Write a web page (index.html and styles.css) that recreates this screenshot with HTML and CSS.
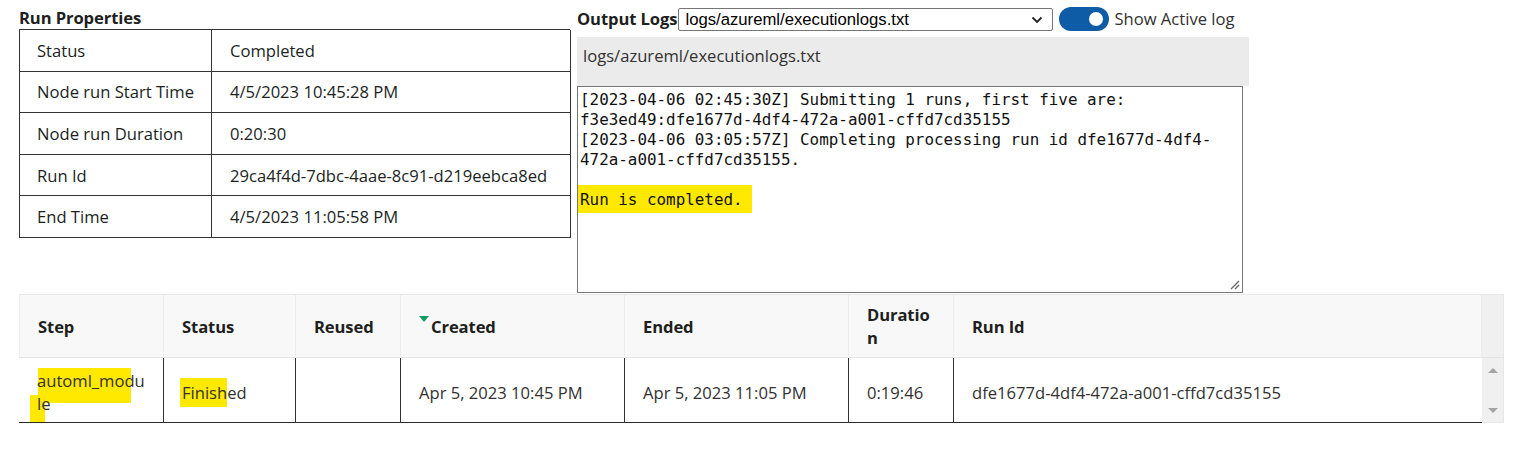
FILE: index.html
```html
<!DOCTYPE html>
<html lang="en">
<head>
<meta charset="utf-8">
<title>Run Properties</title>
<link rel="stylesheet" href="styles.css">
</head>
<body>
<div class="page">
  <div class="top">
    <section class="props">
      <h2 class="title">Run Properties</h2>
      <div class="ptable">
        <div class="pk">Status</div><div class="pv">Completed</div>
        <div class="pk">Node run Start Time</div><div class="pv">4/5/2023 10:45:28 PM</div>
        <div class="pk">Node run Duration</div><div class="pv">0:20:30</div>
        <div class="pk">Run Id</div><div class="pv">29ca4f4d-7dbc-4aae-8c91-d219eebca8ed</div>
        <div class="pk">End Time</div><div class="pv">4/5/2023 11:05:58 PM</div>
      </div>
    </section>
    <section class="logs">
      <div class="logs-head">
        <span class="logs-label">Output Logs</span>
        <div class="select">
          <span>logs/azureml/executionlogs.txt</span>
          <svg class="chev" width="12" height="8" viewBox="0 0 12 8"><path d="M1.5 1.5 L6 6 L10.5 1.5" fill="none" stroke="#222" stroke-width="1.8"/></svg>
        </div>
        <div class="toggle"><span class="knob"></span></div>
        <span class="toggle-label">Show Active log</span>
      </div>
      <div class="logs-file">logs/azureml/executionlogs.txt</div>
      <div class="logs-text"><div class="mono">[2023-04-06 02:45:30Z] Submitting 1 runs, first five are:
f3e3ed49:dfe1677d-4df4-472a-a001-cffd7cd35155
[2023-04-06 03:05:57Z] Completing processing run id dfe1677d-4df4-
472a-a001-cffd7cd35155.

<span class="hl-run">Run is completed.</span></div><svg class="grip" width="10" height="10" viewBox="0 0 10 10"><path d="M1 9 L9 1 M5 9 L9 5" stroke="#666" stroke-width="1.3"/></svg></div>
    </section>
  </div>

  <div class="runs">
    <div class="th">Step</div>
    <div class="th">Status</div>
    <div class="th">Reused</div>
    <div class="th"><span class="sort"></span>Created</div>
    <div class="th">Ended</div>
    <div class="th">Duratio<br>n</div>
    <div class="th">Run Id</div>
    <div class="scroll">
      <div class="scroll-head"></div>
      <div class="scroll-track">
        <span class="arr-up"></span>
        <span class="arr-down"></span>
      </div>
    </div>

    <div class="td step"><span class="mark mark-a"></span><span class="mark mark-b"></span><span class="txt">automl_modu<br>le</span></div>
    <div class="td"><span class="txt"><span class="hl-fin">Finish</span>ed</span></div>
    <div class="td"></div>
    <div class="td">Apr 5, 2023 10:45 PM</div>
    <div class="td">Apr 5, 2023 11:05 PM</div>
    <div class="td">0:19:46</div>
    <div class="td last">dfe1677d-4df4-472a-a001-cffd7cd35155</div>
  </div>
</div>
</body>
</html>
```

FILE: styles.css
```css
* { box-sizing: border-box; }

html, body {
  margin: 0;
  padding: 0;
  background: #ffffff;
}

body {
  font-family: "Open Sans", "Noto Sans", sans-serif;
  font-size: 16.6px;
  color: #252423;
}

.page {
  width: 1540px;
}

.top {
  display: flex;
  gap: 7px;
  padding: 5px 0 0 19px;
}

/* ---------- Run properties ---------- */
.props {
  width: 551px;
}

.title {
  margin: 2px 0 0;
  font-size: 16.6px;
  font-weight: 700;
  line-height: 22px;
  color: #201f1e;
  letter-spacing: -0.1px;
}

.ptable {
  display: grid;
  grid-template-columns: 192px 359px;
  grid-auto-rows: 41.6px;
  border-top: 1px solid #333;
  border-left: 1px solid #333;
}

.pk, .pv {
  display: flex;
  align-items: center;
  border-right: 1px solid #333;
  border-bottom: 1px solid #333;
  color: #201f1e;
  white-space: nowrap;
}

.pk { padding-left: 17px; }
.pv { padding-left: 18px; }

/* ---------- Output logs ---------- */
.logs {
  width: 672px;
}

.logs-head {
  display: flex;
  align-items: center;
  height: 26px;
  margin-bottom: 6px;
}

.logs-label {
  font-weight: 700;
  color: #201f1e;
  letter-spacing: -0.1px;
  white-space: nowrap;
}

.select {
  display: flex;
  align-items: center;
  justify-content: space-between;
  width: 375px;
  height: 23px;
  margin-top: 3px;
  margin-left: 1px;
  padding: 0 9px 0 6px;
  border: 1px solid #767676;
  border-radius: 2px;
  background: #fff;
  color: #000;
  font-family: "Liberation Sans", Arial, sans-serif;
  font-size: 16.7px;
  white-space: nowrap;
}

.chev { display: block; }

.toggle {
  display: flex;
  align-items: center;
  justify-content: flex-end;
  width: 50px;
  height: 24px;
  margin: 2px 0 0 6px;
  padding-right: 6px;
  border-radius: 12px;
  background: #0f5ca6;
}

.knob {
  width: 14px;
  height: 14px;
  border-radius: 50%;
  background: #fff;
}

.toggle-label {
  margin-left: 5px;
  color: #323130;
  white-space: nowrap;
}

.logs-file {
  height: 49px;
  padding: 8px 0 0 6px;
  line-height: 22px;
  background: #ebebeb;
  color: #323130;
}

.logs-text {
  position: relative;
  width: 666px;
  height: 207px;
  padding: 3px 2px 2px;
  border: 1px solid #767676;
  background: #fff;
}

.mono {
  font-family: "DejaVu Sans Mono", "Liberation Mono", monospace;
  font-size: 15.9px;
  line-height: 20px;
  white-space: pre;
  color: #111;
}

.hl-run {
  background: #ffe900;
  padding: 5px 9px 4px 2px;
  margin-left: -2px;
}

.grip {
  position: absolute;
  right: 2px;
  bottom: 2px;
}

/* ---------- Runs table ---------- */
.runs {
  display: grid;
  grid-template-columns: 145px 132px 105px 224px 224px 105px 528px 22px;
  grid-template-rows: 63px 65px;
  width: 1485px;
  margin: 1px 0 0 19px;
  border-top: 1px solid #e8e8e8;
}

.th {
  display: flex;
  align-items: center;
  padding: 0 10px 0 18px;
  background: #f8f8f8;
  border-right: 1px solid #ececec;
  border-bottom: 1px solid #e6e6e6;
  font-weight: 700;
  line-height: 23px;
  color: #201f1e;
  letter-spacing: -0.1px;
  white-space: nowrap;
}

.th:first-child { border-left: 1px solid #ececec; }

.sort {
  display: inline-block;
  width: 0;
  height: 0;
  margin: -14px 2px 0 0;
  border-left: 5px solid transparent;
  border-right: 5px solid transparent;
  border-top: 6px solid #179c68;
}

.scroll {
  grid-column: 8;
  grid-row: 1 / 3;
  display: flex;
  flex-direction: column;
  background: #f0f0f0;
  border-right: 1px solid #e6e6e6;
  border-bottom: 1px solid #e6e6e6;
}

.scroll-head {
  height: 63px;
  border-bottom: 1px solid #e2e2e2;
}

.scroll-track {
  flex: 1;
  display: flex;
  flex-direction: column;
  align-items: center;
  justify-content: space-between;
  padding: 10px 0 9px;
}

.arr-up, .arr-down {
  width: 0;
  height: 0;
  border-left: 5px solid transparent;
  border-right: 5px solid transparent;
}

.arr-up { border-bottom: 5px solid #a3a3a3; }
.arr-down { border-top: 5px solid #a3a3a3; }

.td {
  position: relative;
  display: flex;
  align-items: center;
  padding: 4px 10px 0 18px;
  border-right: 1px solid #333;
  border-bottom: 1px solid #2b2b2b;
  line-height: 23px;
  color: #323130;
  white-space: nowrap;
}

.td.last { border-right: none; }

.txt {
  position: relative;
  z-index: 1;
}

.mark {
  position: absolute;
  z-index: 0;
  background: #ffe900;
}

.mark-a {
  left: 19px;
  top: 10px;
  width: 93px;
  height: 35px;
}

.mark-b {
  left: 11px;
  top: 37px;
  width: 15px;
  height: 27px;
}

.hl-fin {
  background: #ffe900;
  padding: 3px 0 3px 2px;
  margin-left: -2px;
}
```
